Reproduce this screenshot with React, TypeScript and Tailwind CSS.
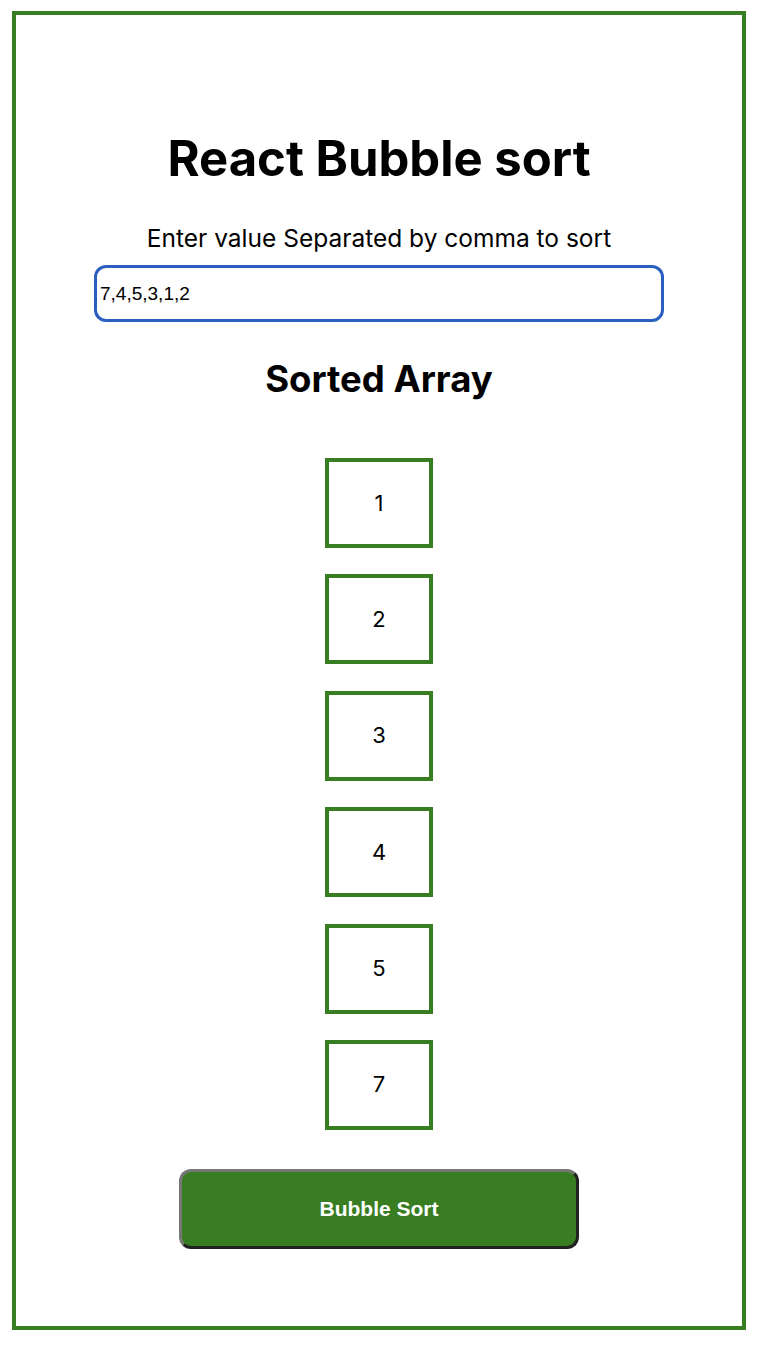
import React from "react";

export default function App() {
  const sorted = [1, 2, 3, 4, 5, 7];
  return (
    <div className="bg-white min-h-[1347px] pt-[11px] pl-[12px]" style={{ fontFamily: "Inter, 'Noto Sans', sans-serif" }}>
      <div className="w-[734px] h-[1319px] border-4 border-[#387d22] flex flex-col items-center">
        <h1 className="mt-[115px] text-[49px] leading-[58px] font-bold text-black">React Bubble sort</h1>
        <p className="mt-[35px] text-[24.5px] leading-[30px] text-black">Enter value Separated by comma to sort</p>
        <input
          defaultValue="7,4,5,3,1,2"
          className="mt-[12px] w-[570px] h-[57px] border-[3px] border-[#2a5fc0] rounded-[12px] px-[3px] text-[19px] text-black outline-none"
          style={{ fontFamily: "'Liberation Sans', Arial, sans-serif" }}
        />
        <h2 className="mt-[35px] text-[36.5px] leading-[44px] font-bold text-black">Sorted Array</h2>
        <div className="mt-[57px] flex flex-col gap-[26.4px]">
          {sorted.map((n) => (
            <div key={n} className="w-[108px] h-[90px] border-4 border-[#387d22] flex items-center justify-center text-[22px] text-black">
              {n}
            </div>
          ))}
        </div>
        <button
          className="mt-[39px] w-[400px] h-[80px] bg-[#387d22] rounded-[12px] border-[3px] border-t-[#767676] border-l-[#767676] border-b-[#222222] border-r-[#222222] text-white font-bold text-[21px]"
          style={{ fontFamily: "'Liberation Sans', Arial, sans-serif" }}
        >
          Bubble Sort
        </button>
      </div>
    </div>
  );
}
